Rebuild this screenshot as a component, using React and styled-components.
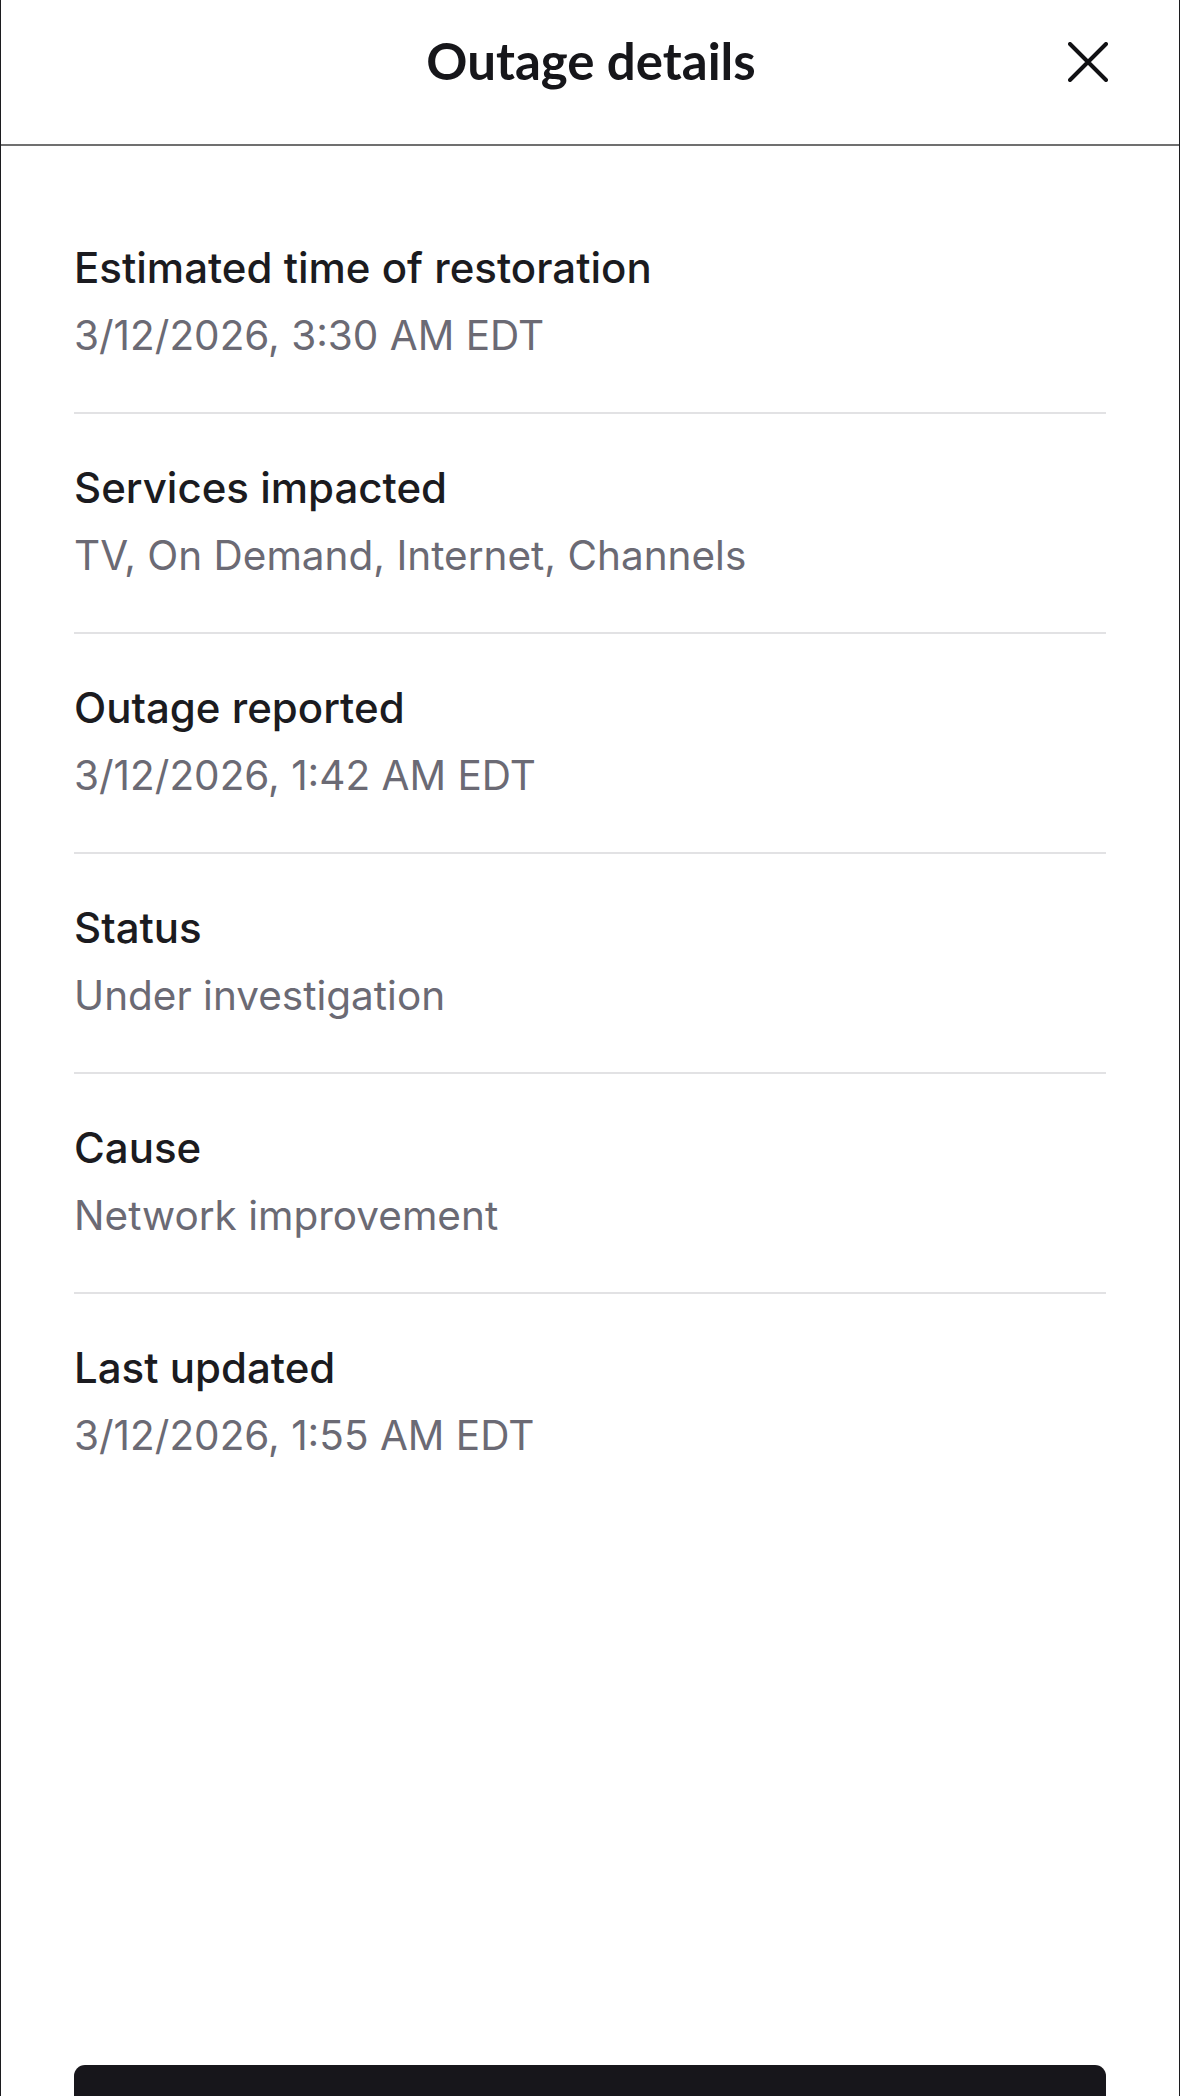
import React from "react";
import styled, { createGlobalStyle } from "styled-components";

const GlobalStyle = createGlobalStyle`
  html, body {
    margin: 0;
    padding: 0;
    background: #ffffff;
  }
  body {
    font-family: Inter, "Noto Sans", sans-serif;
    -webkit-font-smoothing: antialiased;
  }
  * { box-sizing: border-box; }
`;

const Sheet = styled.div`
  width: 100%;
  min-height: 2249px;
  display: flex;
  flex-direction: column;
  background: #ffffff;
  border-left: 1px solid #1c1c1f;
  border-right: 1px solid #1c1c1f;
`;

const Header = styled.header`
  height: 146px;
  flex-shrink: 0;
  display: grid;
  grid-template-columns: 1fr auto 1fr;
  align-items: center;
  padding: 0 71px 20px 73px;
  border-bottom: 2px solid #707070;
`;

const Title = styled.h1`
  grid-column: 2;
  margin: 0;
  font-family: Lato, "Noto Sans", sans-serif;
  font-weight: 700;
  font-size: 51px;
  line-height: 1;
  color: #16161a;
  padding-bottom: 4px;
`;

const CloseButton = styled.button`
  grid-column: 3;
  justify-self: end;
  width: 40px;
  height: 40px;
  padding: 0;
  border: 0;
  background: transparent;
  display: flex;
  align-items: center;
  justify-content: center;
  cursor: pointer;
  color: #111114;
`;

const Content = styled.main`
  flex: 1;
  padding: 48px 73px 0;
`;

const Row = styled.section`
  padding: 40px 0 ${(p) => (p.$last ? "0" : "42px")};
  border-bottom: ${(p) => (p.$last ? "none" : "2.5px solid #e2e2e4")};
`;

const Label = styled.div`
  font-family: Inter, "Noto Sans", sans-serif;
  font-weight: 500;
  font-size: 42px;
  line-height: 68px;
  color: #1b1b20;
`;

const Value = styled.div`
  font-family: Inter, "Noto Sans", sans-serif;
  font-weight: 400;
  font-size: 40.5px;
  line-height: 68px;
  color: #6b6a74;
`;

const Footer = styled.footer`
  flex-shrink: 0;
  padding: 0 73px 40px;
`;

const PrimaryButton = styled.button`
  display: block;
  width: 100%;
  height: 144px;
  padding: 0;
  border: 0;
  border-radius: 11px;
  background: #17161b;
  cursor: pointer;
`;

const rows = [
  { label: "Estimated time of restoration", value: "3/12/2026, 3:30 AM EDT" },
  { label: "Services impacted", value: "TV, On Demand, Internet, Channels" },
  { label: "Outage reported", value: "3/12/2026, 1:42 AM EDT" },
  { label: "Status", value: "Under investigation" },
  { label: "Cause", value: "Network improvement" },
  { label: "Last updated", value: "3/12/2026, 1:55 AM EDT" },
];

function CloseIcon() {
  return (
    <svg width="40" height="40" viewBox="0 0 40 40" fill="none" aria-hidden="true">
      <path
        d="M2 2 L38 38 M38 2 L2 38"
        stroke="currentColor"
        strokeWidth="4"
        strokeLinecap="round"
      />
    </svg>
  );
}

export default function App() {
  return (
    <>
      <GlobalStyle />
      <Sheet>
        <Header>
          <Title>Outage details</Title>
          <CloseButton aria-label="Close">
            <CloseIcon />
          </CloseButton>
        </Header>
        <Content>
          {rows.map((r, i) => (
            <Row key={r.label} $last={i === rows.length - 1}>
              <Label>{r.label}</Label>
              <Value>{r.value}</Value>
            </Row>
          ))}
        </Content>
        <Footer>
          <PrimaryButton aria-label="Close outage details" />
        </Footer>
      </Sheet>
    </>
  );
}
